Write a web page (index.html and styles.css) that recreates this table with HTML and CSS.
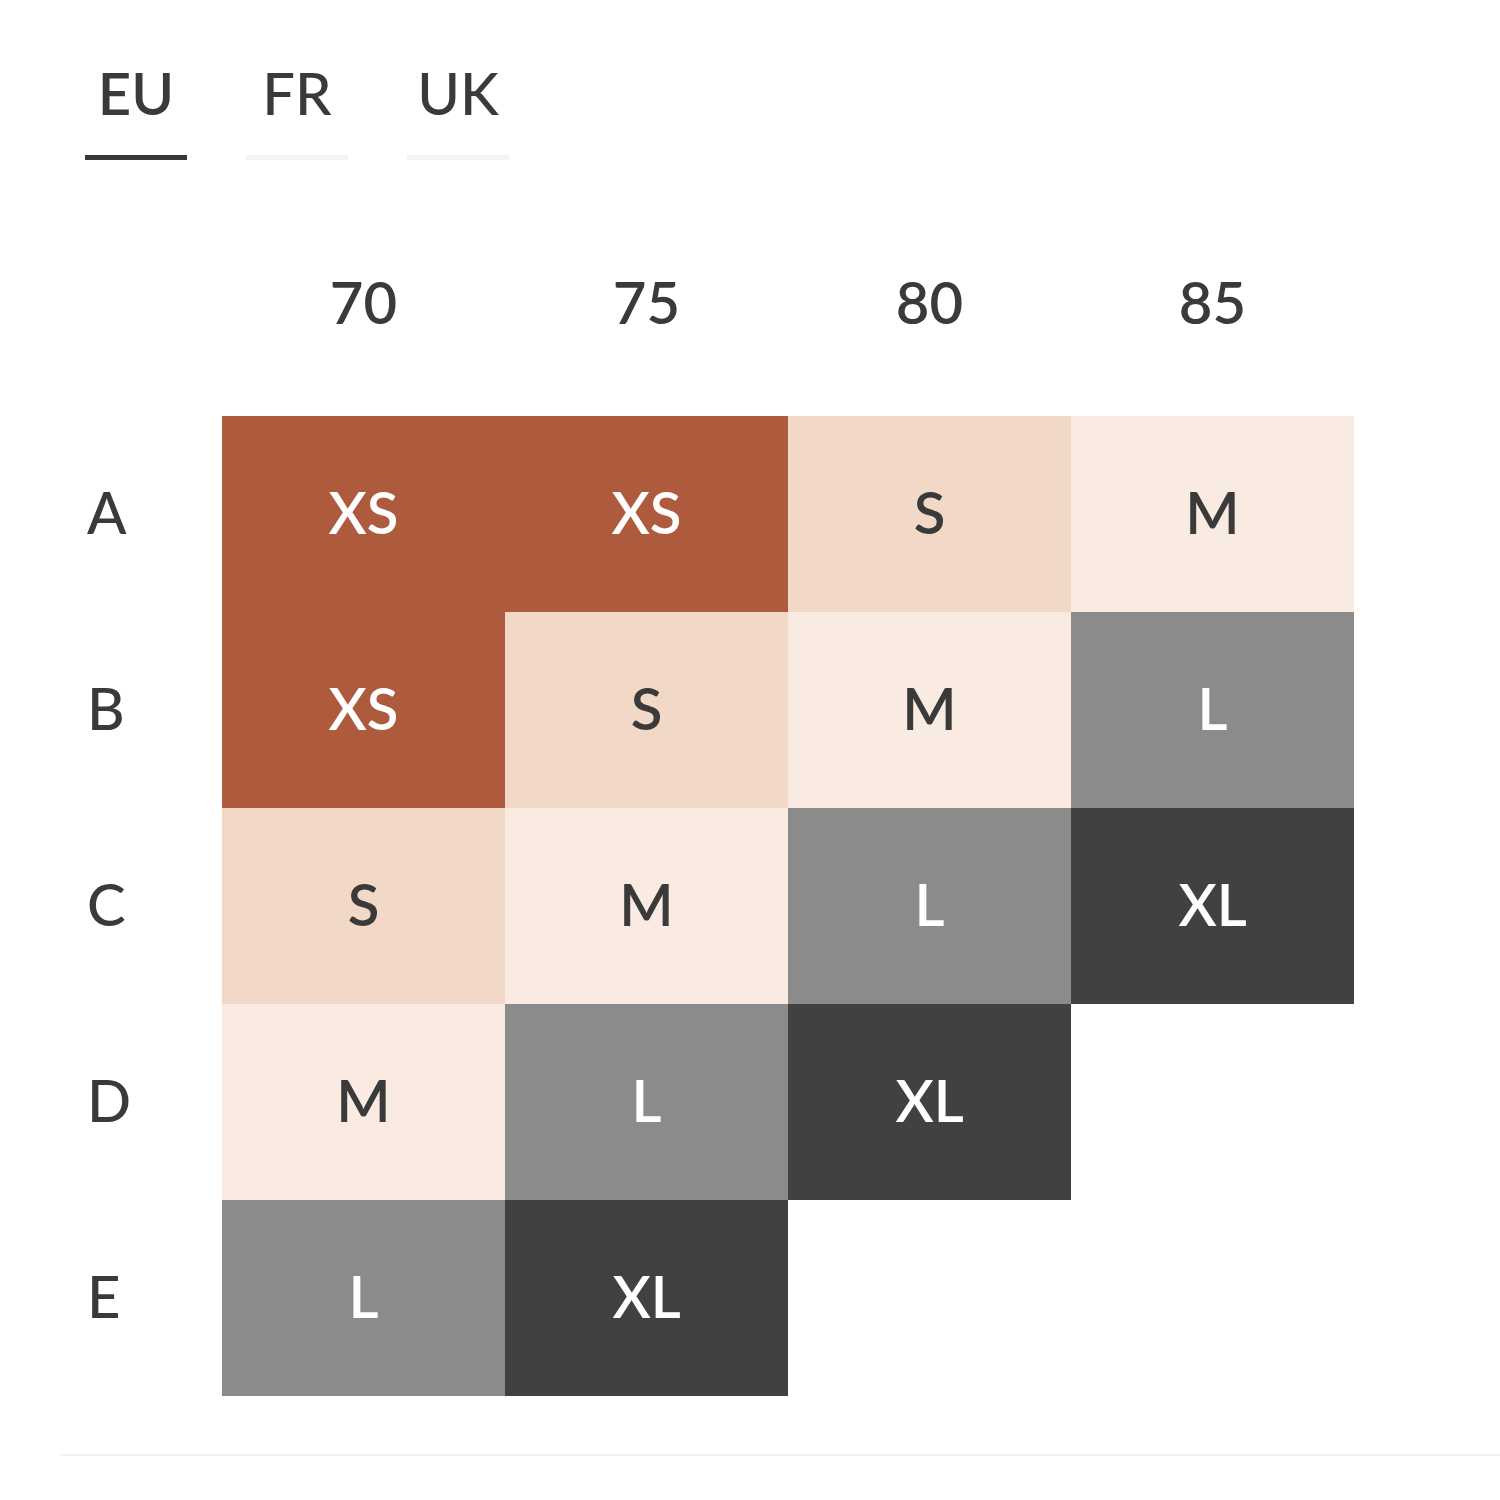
FILE: index.html
```html
<!DOCTYPE html>
<html>
<head>
<meta charset="utf-8">
<link rel="stylesheet" href="styles.css">
</head>
<body>
<div class="page">
  <div class="tabs">
    <div class="tab active"><span class="tab-label">EU</span></div>
    <div class="tab"><span class="tab-label">FR</span></div>
    <div class="tab"><span class="tab-label">UK</span></div>
  </div>
  <div class="chart">
    <div class="corner"></div>
    <div class="col-head">70</div>
    <div class="col-head">75</div>
    <div class="col-head">80</div>
    <div class="col-head">85</div>

    <div class="row-head">A</div>
    <div class="cell rust">XS</div>
    <div class="cell rust">XS</div>
    <div class="cell peach">S</div>
    <div class="cell cream">M</div>

    <div class="row-head">B</div>
    <div class="cell rust">XS</div>
    <div class="cell peach">S</div>
    <div class="cell cream">M</div>
    <div class="cell grey">L</div>

    <div class="row-head">C</div>
    <div class="cell peach">S</div>
    <div class="cell cream">M</div>
    <div class="cell grey">L</div>
    <div class="cell dark">XL</div>

    <div class="row-head">D</div>
    <div class="cell cream">M</div>
    <div class="cell grey">L</div>
    <div class="cell dark">XL</div>
    <div class="cell empty"></div>

    <div class="row-head">E</div>
    <div class="cell grey">L</div>
    <div class="cell dark">XL</div>
    <div class="cell empty"></div>
    <div class="cell empty"></div>
  </div>
  <div class="divider"></div>
</div>
</body>
</html>
```

FILE: styles.css
```css
html, body {
  margin: 0;
  padding: 0;
  background: #ffffff;
}

body {
  font-family: "Lato", "Noto Sans", sans-serif;
  color: #383838;
}

.page {
  width: 1500px;
  height: 1500px;
  box-sizing: border-box;
  padding-top: 55px;
}

.tabs {
  display: flex;
  gap: 59px;
  padding-left: 85px;
}

.tab {
  width: 102px;
  display: flex;
  flex-direction: column;
  align-items: center;
  border-bottom: 5px solid #f3f3f3;
  padding-bottom: 24px;
}

.tab.active {
  border-bottom-color: #383838;
}

.tab-label {
  font-size: 58px;
  line-height: 76px;
  font-weight: 500;
  color: #3a3a3a;
}

.tab.active .tab-label {
  font-weight: 600;
}

.chart {
  display: grid;
  grid-template-columns: 137px repeat(4, 283px);
  grid-template-rows: 256px repeat(5, 196px);
  padding-left: 85px;
}

.corner {
  height: 100%;
}

.col-head {
  display: flex;
  align-items: center;
  justify-content: center;
  font-size: 58px;
  font-weight: 600;
  color: #3a3a3a;
  padding-top: 26px;
  box-sizing: border-box;
}

.row-head {
  display: flex;
  align-items: center;
  font-size: 58px;
  font-weight: 500;
  color: #3a3a3a;
  padding-left: 2px;
  padding-bottom: 6px;
  box-sizing: border-box;
}

.cell {
  display: flex;
  align-items: center;
  justify-content: center;
  font-size: 58px;
  font-weight: 600;
  padding-bottom: 6px;
  box-sizing: border-box;
}

.rust { background: #ad5a3d; color: #ffffff; }
.peach { background: #f2d8c6; color: #3a3a3a; }
.cream { background: #faebe2; color: #3a3a3a; }
.grey { background: #8b8b8b; color: #ffffff; }
.dark { background: #414141; color: #ffffff; }
.empty { background: transparent; }

.divider {
  margin-top: 58px;
  margin-left: 60px;
  height: 2px;
  background: #f2f2f2;
}
```
